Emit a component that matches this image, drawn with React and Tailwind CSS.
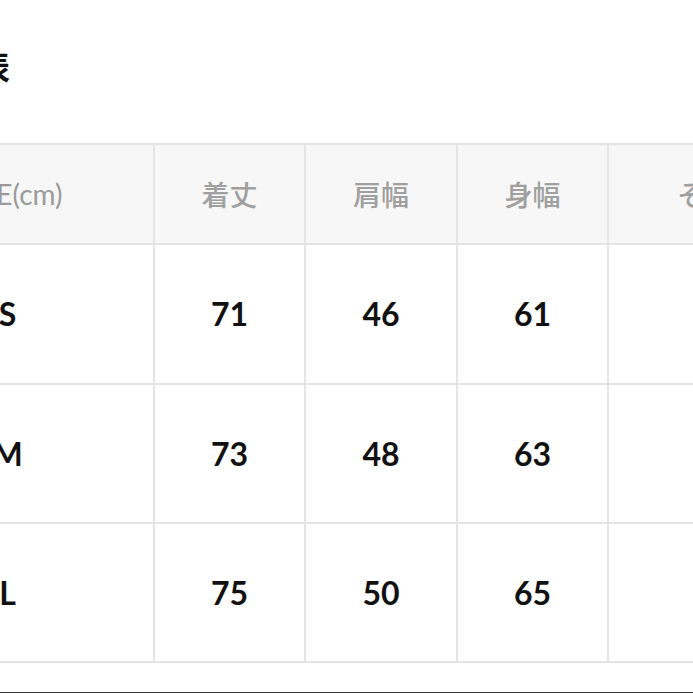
import React from "react";

const rows = [
  ["S", "71", "46", "61", ""],
  ["M", "73", "48", "63", ""],
  ["L", "75", "50", "65", ""],
];

export default function App() {
  return (
    <div className="w-[693px] h-[693px] overflow-hidden bg-white">
      <div className="ml-[-140px] pt-[49px]">
        <div
          className="ml-[23px] h-[32px] leading-[32px] text-[32px] font-bold text-[#111] whitespace-nowrap"
          style={{ fontFamily: '"Noto Sans CJK JP", sans-serif' }}
        >
          サイズ表
        </div>
        <div className="mt-[62px] w-max grid grid-cols-[291px_149px_150px_149px_220px] grid-rows-[98px_138px_137px_137px] gap-[2px] p-[2px] bg-[#e4e4e4]">
          <div
            className="bg-[#f7f7f7] flex items-center justify-center pl-[4px] text-[28px] text-[#9b9b9b]"
            style={{ fontFamily: "Lato, sans-serif" }}
          >
            SIZE(cm)
          </div>
          {["着丈", "肩幅", "身幅", "そで丈"].map((h) => (
            <div
              key={h}
              className="bg-[#f7f7f7] flex items-center justify-center text-[28px] font-medium text-[#a0a0a0]"
              style={{ fontFamily: '"Noto Sans CJK JP", sans-serif' }}
            >
              {h}
            </div>
          ))}
          {rows.map((r) =>
            r.map((c, i) => (
              <div
                key={r[0] + i}
                className="bg-white flex items-center justify-center text-[32px] font-bold text-[#111]"
                style={{ fontFamily: "Lato, sans-serif" }}
              >
                {c}
              </div>
            ))
          )}
        </div>
        <div className="mt-[29px] border-t-2 border-[#333] h-[4px]" />
      </div>
    </div>
  );
}
